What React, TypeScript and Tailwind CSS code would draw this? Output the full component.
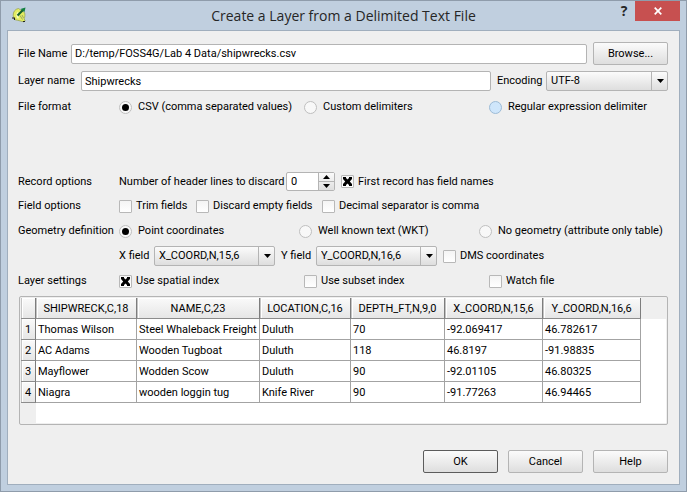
import { useId, useState, type ReactNode } from 'react';

const textBox =
  'h-[20px] min-w-0 flex-1 rounded-[2px] border border-[#b4b4b4] bg-white px-[3px] text-[11px] leading-[18px] text-black outline-none';

function PushButton({ children, primary = false }: { children: ReactNode; primary?: boolean }) {
  return (
    <button
      type="button"
      className={`h-[23px] w-[75px] shrink-0 rounded-[2px] border bg-linear-to-b from-[#fbfbfb] to-[#dedede] text-[11px] leading-[20px] ${
        primary ? 'border-[#5c5c5c]' : 'border-[#b4b4b4]'
      }`}
    >
      {children}
    </button>
  );
}

function Radio({ name, label, checked, hot = false, onSelect }: {
  name: string;
  label: string;
  checked: boolean;
  hot?: boolean;
  onSelect: () => void;
}) {
  return (
    <label className="flex h-[14px] items-center gap-[6px] whitespace-nowrap">
      <span className="grid size-[13px] shrink-0 place-items-center">
        <input
          type="radio"
          name={name}
          checked={checked}
          onChange={onSelect}
          className={`col-start-1 row-start-1 size-[13px] appearance-none rounded-full border ${
            hot ? 'border-[#9dbbd6] bg-[#cfe6fb]' : 'border-[#bfbfbf] bg-[#f8f8f8]'
          }`}
        />
        {checked && <span className="pointer-events-none col-start-1 row-start-1 size-[7px] rounded-full bg-black" />}
      </span>
      {label}
    </label>
  );
}

function CheckBox({ label, initial = false }: { label: string; initial?: boolean }) {
  const [on, setOn] = useState(initial);
  return (
    <label className="flex h-[14px] items-center gap-[4px] whitespace-nowrap">
      <span className="grid size-[13px] shrink-0 place-items-center">
        <input
          type="checkbox"
          checked={on}
          onChange={() => setOn(!on)}
          className="col-start-1 row-start-1 size-[13px] appearance-none rounded-[1px] border border-[#b8b8b8] bg-linear-to-b from-[#f4f4f4] to-white"
        />
        {on && (
          <svg viewBox="0 0 9 9" className="pointer-events-none col-start-1 row-start-1 size-[9px]">
            <path d="M0 1.5V0h3v1l1.5 1.5L6 1V0h3v2L6.8 4.5 9 7v2H6V8L4.5 6.5 3 8v1H0V7l2.2-2.5L0 2z" fill="#000" />
          </svg>
        )}
      </span>
      {label}
    </label>
  );
}

function Combo({ id, options }: { id: string; options: string[] }) {
  return (
    <span className="grid h-[20px] w-full min-w-0">
      <select
        id={id}
        className="col-start-1 row-start-1 w-full appearance-none rounded-[2px] border border-[#b4b4b4] bg-linear-to-b from-[#fbfbfb] to-[#dedede] pr-[18px] pl-[4px] text-[11px] leading-[18px] outline-none"
      >
        {options.map((o) => (
          <option key={o}>{o}</option>
        ))}
      </select>
      <span className="pointer-events-none col-start-1 row-start-1 my-px flex w-[17px] items-center justify-center justify-self-end border-l border-[#b4b4b4]">
        <svg viewBox="0 0 7 4" className="h-[4px] w-[7px]">
          <path d="M0 0h7L3.5 4z" />
        </svg>
      </span>
    </span>
  );
}

function Row({ title, children }: { title: string; children: ReactNode }) {
  const id = useId();
  return (
    <div role="group" aria-labelledby={id} className="flex items-center">
      <span id={id} className="w-[101px] shrink-0 whitespace-nowrap">
        {title}
      </span>
      {children}
    </div>
  );
}

const columns = ['SHIPWRECK,C,18', 'NAME,C,23', 'LOCATION,C,16', 'DEPTH_FT,N,9,0', 'X_COORD,N,15,6', 'Y_COORD,N,16,6'];
const records = [
  ['Thomas Wilson', 'Steel Whaleback Freight', 'Duluth', '70', '-92.069417', '46.782617'],
  ['AC Adams', 'Wooden Tugboat', 'Duluth', '118', '46.8197', '-91.98835'],
  ['Mayflower', 'Wodden Scow', 'Duluth', '90', '-92.01105', '46.80325'],
  ['Niagra', 'wooden loggin tug', 'Knife River', '90', '-91.77263', '46.94465'],
];
const headCell =
  'h-[21px] border-r border-b border-r-[#7d7d7d] border-b-[#8c8c8c] bg-linear-to-b from-[#fafafa] to-[#e6e6e6] px-0 pt-[2px] pb-0 text-center font-normal whitespace-nowrap shadow-[inset_1px_0_0_#c4c4c4,inset_2px_1px_0_#fff]';

function PreviewTable() {
  return (
    <div className="mt-[8px] ml-px h-[129px] overflow-hidden rounded-[2px] border border-[#b4b4b4] bg-[#efefef] p-px">
      <div className="flex h-full flex-col bg-[linear-gradient(#efefef_21px,transparent_21px),linear-gradient(90deg,#efefef_15px,#fff_15px)]">
        <table className="w-[620px] table-fixed border-separate border-spacing-0">
          <colgroup>
            <col className="w-[15px]" />
            <col className="w-[101px]" />
            <col className="w-[123px]" />
            <col className="w-[91px]" />
            <col className="w-[94px]" />
            <col className="w-[98px]" />
            <col className="w-[98px]" />
          </colgroup>
          <thead>
            <tr>
              <th className={headCell} aria-label="Row" />
              {columns.map((c) => (
                <th key={c} scope="col" className={headCell}>
                  {c}
                </th>
              ))}
            </tr>
          </thead>
          <tbody>
            {records.map((r, i) => (
              <tr key={r[0]}>
                <th scope="row" className={headCell}>
                  {i + 1}
                </th>
                {r.map((v, j) => (
                  <td key={j} className="h-[21px] border-r border-b border-[#a3a3a3] bg-white pt-[2px] pr-0 pb-0 pl-[2px] whitespace-nowrap">
                    {v}
                  </td>
                ))}
              </tr>
            ))}
          </tbody>
        </table>
      </div>
    </div>
  );
}

function AppIcon() {
  return (
    <svg viewBox="0 0 16 16" className="size-[16px]" aria-hidden="true">
      <path d="M6.5 1.5C3 2 1 5 1.2 8.5c.2 3 1.600 4.700 4 4.700l6.300 1.600 1.700-.8-1-2.200c.8-2 1-4.500.3-6.300z" fill="#e3ed62" stroke="#8f9c52" strokeWidth=".7" />
      <path d="M6 5.500C4.800 7 4.800 10 6.500 11" fill="none" stroke="#fafcc8" strokeWidth="1.500" />
      <path d="M8 8.500l2.500 4M10 8l1.500 3" stroke="#93a060" strokeWidth=".9" />
      <path d="M5.500 8.500L11 3" stroke="#17602a" strokeWidth="2.200" />
      <path d="M8.500 2L13.500.5 12.500 5z" fill="#128040" />
      <path d="M0 11h2.500v2M11 14.500h2" fill="none" stroke="#222" strokeWidth="1.100" />
    </svg>
  );
}

export default function App() {
  const [format, setFormat] = useState(0);
  const [geometry, setGeometry] = useState(0);
  const [skip, setSkip] = useState(0);

  return (
    <div className="flex min-h-screen flex-col border border-[#8f9cab] bg-[#c0cfdf] px-[6px] pb-[6px] font-[Roboto,'DejaVu_Sans_Condensed',sans-serif] text-[11px] leading-[14px] text-black">
      <header className="flex h-[29px] items-start">
        <div className="flex w-[67px] pt-[6px] pl-[5px]">
          <AppIcon />
        </div>
        <h1 className="flex-1 text-center font-['Open_Sans',sans-serif] text-[14px] leading-[30px] text-[#262626]">
          Create a Layer from a Delimited Text File
        </h1>
        <button type="button" aria-label="Help" className="flex h-[20px] w-[22px] items-center justify-center font-['Open_Sans',sans-serif] text-[14px] leading-none font-bold text-[#262626]">
          ?
        </button>
        <button type="button" aria-label="Close" className="flex h-[20px] w-[45px] items-center justify-center bg-[#c75050]">
          <svg viewBox="0 0 8 8" className="size-[8px]">
            <path d="M.7.7l6.600 6.600M7.300.7L.7 7.300" stroke="#fff" strokeWidth="1.700" />
          </svg>
        </button>
      </header>

      <main className="flex flex-1 flex-col border border-[#a0aebd] bg-[#efefef] pt-[11px] pr-[11px] pb-[11px] pl-[10px]">
        <div className="flex items-center">
          <label htmlFor="file" className="w-[53px] shrink-0 whitespace-nowrap">File Name</label>
          <input id="file" className={textBox} defaultValue="D:/temp/FOSS4G/Lab 4 Data/shipwrecks.csv" />
          <span className="w-[6px]" />
          <PushButton>Browse...</PushButton>
        </div>

        <div className="mt-[6px] flex items-center">
          <label htmlFor="layer" className="w-[63px] shrink-0 whitespace-nowrap">Layer name</label>
          <input id="layer" className={textBox} defaultValue="Shipwrecks" />
          <label htmlFor="enc" className="w-[55px] shrink-0 pl-[6px] whitespace-nowrap">Encoding</label>
          <div className="flex w-[122px] shrink-0">
            <Combo id="enc" options={['UTF-8', 'UTF-16', 'ISO-8859-1']} />
          </div>
        </div>

        <div className="mt-[9px]">
          <Row title="File format">
            <div className="grid flex-1 grid-cols-3 gap-x-[6px]">
              {['CSV (comma separated values)', 'Custom delimiters', 'Regular expression delimiter'].map((l, i) => (
                <Radio key={l} name="format" label={l} checked={format === i} hot={i === 2} onSelect={() => setFormat(i)} />
              ))}
            </div>
          </Row>
        </div>

        <div className="mt-[58px] flex flex-col gap-[8px]">
          <Row title="Record options">
            <label htmlFor="skip" className="w-[167px] shrink-0 whitespace-nowrap">Number of header lines to discard</label>
            <div className="mr-[6px] flex h-[19px] w-[49px] rounded-[2px] border border-[#b4b4b4] bg-white">
              <input id="skip" value={skip} onChange={(e) => setSkip(Number(e.target.value) || 0)} className="w-[31px] min-w-0 pl-[4px] outline-none" />
              <div className="flex flex-1 flex-col divide-y divide-[#b4b4b4] border-l border-[#b4b4b4] bg-linear-to-b from-[#fbfbfb] to-[#dedede]">
                <button type="button" aria-label="Increase" onClick={() => setSkip(skip + 1)} className="flex flex-1 items-center justify-center">
                  <svg viewBox="0 0 7 4" className="h-[4px] w-[7px]"><path d="M0 4h7L3.500 0z" /></svg>
                </button>
                <button type="button" aria-label="Decrease" onClick={() => setSkip(Math.max(0, skip - 1))} className="flex flex-1 items-center justify-center">
                  <svg viewBox="0 0 7 4" className="h-[4px] w-[7px]"><path d="M0 0h7L3.500 4z" /></svg>
                </button>
              </div>
            </div>
            <CheckBox label="First record has field names" initial />
          </Row>

          <Row title="Field options">
            <div className="flex">
              <div className="w-[77px]"><CheckBox label="Trim fields" /></div>
              <div className="w-[126px]"><CheckBox label="Discard empty fields" /></div>
              <CheckBox label="Decimal separator is comma" />
            </div>
          </Row>

          <div className="mt-[3px] flex flex-col gap-[8px]">
            <Row title="Geometry definition">
              <div className="grid flex-1 grid-cols-[1fr_1fr_189px] gap-x-[6px]">
                {['Point coordinates', 'Well known text (WKT)', 'No geometry (attribute only table)'].map((l, i) => (
                  <Radio key={l} name="geometry" label={l} checked={geometry === i} onSelect={() => setGeometry(i)} />
                ))}
              </div>
            </Row>

            <div className="flex items-center pl-[101px]">
              <label htmlFor="xf" className="w-[35px] shrink-0 whitespace-nowrap">X field</label>
              <div className="mr-[6px] flex w-[121px]"><Combo id="xf" options={columns.slice(4)} /></div>
              <label htmlFor="yf" className="w-[35px] shrink-0 whitespace-nowrap">Y field</label>
              <div className="mr-[6px] flex w-[121px]"><Combo id="yf" options={[columns[5], columns[4]]} /></div>
              <CheckBox label="DMS coordinates" />
            </div>

            <Row title="Layer settings">
              <div className="grid flex-1 grid-cols-3 gap-x-[6px]">
                <CheckBox label="Use spatial index" initial />
                <CheckBox label="Use subset index" />
                <CheckBox label="Watch file" />
              </div>
            </Row>
          </div>
        </div>

        <PreviewTable />

        <div className="mt-auto flex justify-end gap-[10px] pt-[25px]">
          <PushButton primary>OK</PushButton>
          <PushButton>Cancel</PushButton>
          <PushButton>Help</PushButton>
        </div>
      </main>
    </div>
  );
}
